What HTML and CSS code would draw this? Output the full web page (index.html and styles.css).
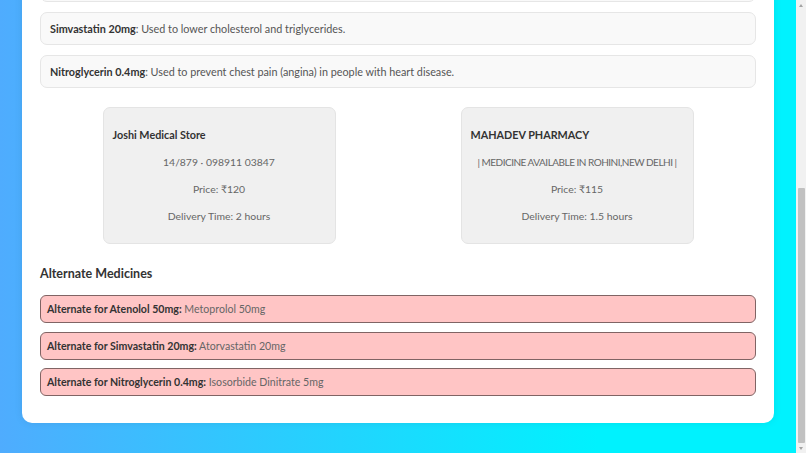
FILE: index.html
```html
<!DOCTYPE html>
<html lang="en">
<head>
<meta charset="utf-8">
<title>Medicine Report</title>
<link rel="stylesheet" href="styles.css">
</head>
<body>
<div class="window">
  <div class="viewport">
    <div class="container">
      <h2 class="section-title">Medicine Uses</h2>
      <div class="med-list">
        <div class="med-card"><b>Atenolol 50mg</b>: Used to treat high blood pressure and heart-related chest pain.</div>
        <div class="med-card"><b>Simvastatin 20mg</b>: Used to lower cholesterol and triglycerides.</div>
        <div class="med-card"><b>Nitroglycerin 0.4mg</b>: Used to prevent chest pain (angina) in people with heart disease.</div>
      </div>

      <div class="stores">
        <div class="store">
          <div class="store-name">Joshi Medical Store</div>
          <div class="store-line">14/879 · 098911 03847</div>
          <div class="store-line">Price: ₹120</div>
          <div class="store-line">Delivery Time: 2 hours</div>
        </div>
        <div class="store">
          <div class="store-name">MAHADEV PHARMACY</div>
          <div class="store-line store-caps">| MEDICINE AVAILABLE IN ROHINI,NEW DELHI |</div>
          <div class="store-line">Price: ₹115</div>
          <div class="store-line">Delivery Time: 1.5 hours</div>
        </div>
      </div>

      <h3 class="alt-title">Alternate Medicines</h3>
      <div class="alt-list">
        <div class="alt-item"><b>Alternate for Atenolol 50mg:</b> Metoprolol 50mg</div>
        <div class="alt-item"><b>Alternate for Simvastatin 20mg:</b> Atorvastatin 20mg</div>
        <div class="alt-item"><b>Alternate for Nitroglycerin 0.4mg:</b> Isosorbide Dinitrate 5mg</div>
      </div>
    </div>
  </div>
  <div class="scrollbar">
    <div class="arrow arrow-up"></div>
    <div class="track"><div class="thumb"></div></div>
    <div class="arrow arrow-down"></div>
  </div>
</div>
</body>
</html>
```

FILE: styles.css
```css
* { box-sizing: border-box; }
html, body { margin: 0; padding: 0; }
body {
  font-family: "Lato", "DejaVu Sans", sans-serif;
  width: 806px;
  height: 453px;
  overflow: hidden;
}
.window {
  display: flex;
  width: 806px;
  height: 453px;
}
.viewport {
  flex: 0 0 796px;
  height: 453px;
  overflow: hidden;
  display: flex;
  flex-direction: column;
  justify-content: flex-end;
  background: linear-gradient(to right, #4facfe 0%, #00f2fe 75%, #00f2fe 100%);
}
.container {
  flex: none;
  width: 752px;
  margin: 0 0 30px 22px;
  padding: 20px 18px 27px;
  background: #fff;
  border-radius: 10px;
  box-shadow: 0 0 8px rgba(0, 0, 0, 0.08);
  display: flex;
  flex-direction: column;
}
.section-title {
  margin: 0 0 10px;
  font-size: 14px;
  color: #333;
}
.med-list {
  display: flex;
  flex-direction: column;
  gap: 10px;
}
.med-card {
  background: #f9f9f9;
  border: 1px solid #e6e6e6;
  border-radius: 7px;
  padding: 8px 9px;
  line-height: 15px;
  font-size: 10.8px;
  color: #555;
  white-space: nowrap;
}
.med-card b { color: #333; font-weight: 700; }
.stores {
  margin-top: 19px;
  display: flex;
  justify-content: space-around;
}
.store {
  width: 233px;
  background: #f0f0f0;
  border: 1px solid #e4e4e4;
  border-radius: 7px;
  padding: 19px 9px;
  display: flex;
  flex-direction: column;
  gap: 11px;
  font-size: 10.4px;
  line-height: 16px;
  color: #666;
  white-space: nowrap;
}
.store-name {
  font-size: 10.8px;
  font-weight: 700;
  color: #333;
}
.store-line { text-align: center; }
.store-caps {
  font-size: 10px;
  letter-spacing: -0.5px;
}
.alt-title {
  margin: 20px 0 0;
  font-size: 12.5px;
  line-height: 20px;
  font-weight: 700;
  color: #333;
}
.alt-list {
  margin-top: 11px;
  display: flex;
  flex-direction: column;
  gap: 8.5px;
}
.alt-item {
  height: 28px;
  background: #ffc5c5;
  border: 1px solid #806464;
  border-radius: 6px;
  padding: 0 6px;
  display: flex;
  align-items: center;
  font-size: 10.6px;
  color: #666;
  white-space: pre;
}
.alt-item b { color: #333; font-weight: 700; }
.scrollbar {
  flex: 0 0 10px;
  height: 453px;
  background: #f1f1f1;
  display: flex;
  flex-direction: column;
}
.arrow {
  flex: 0 0 10px;
  display: flex;
  align-items: center;
  justify-content: center;
}
.arrow::before {
  content: "";
  border-left: 2.5px solid transparent;
  border-right: 2.5px solid transparent;
}
.arrow-up::before { border-bottom: 3px solid #a3a3a3; }
.arrow-down::before { border-top: 3px solid #a3a3a3; }
.track {
  flex: 1;
  display: flex;
  flex-direction: column;
  justify-content: flex-end;
  padding: 0 1.5px;
}
.thumb {
  height: 255px;
  background: #c1c1c1;
  border-radius: 1px;
}
```
